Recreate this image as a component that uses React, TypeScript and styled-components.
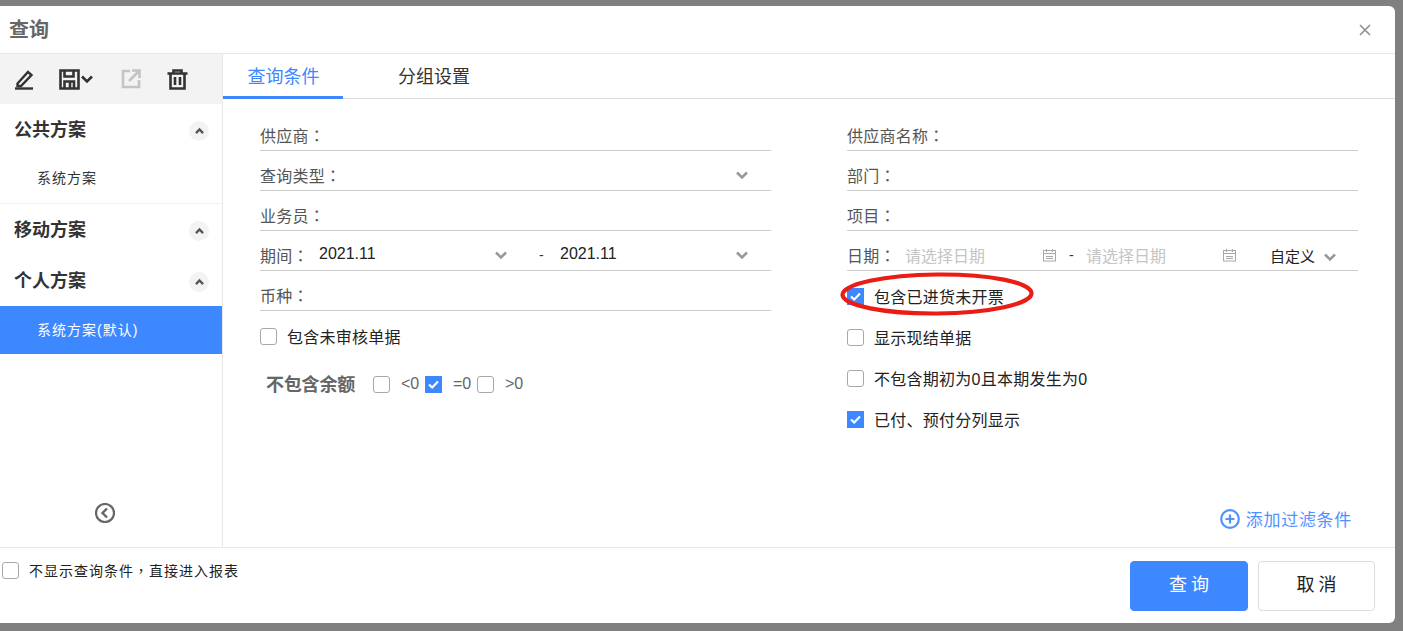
import React from "react";
import styled, { createGlobalStyle } from "styled-components";

const FONT = `"Liberation Sans", "Noto Sans CJK SC", sans-serif`;
const BLUE = "#3d87ff";

const Global = createGlobalStyle`
  html, body { margin: 0; padding: 0; height: 100%; background: #808080; overflow: hidden; }
  * { box-sizing: border-box; }
  body { font-family: ${FONT}; }
`;

const Page = styled.div`
  width: 1403px;
  height: 631px;
  padding: 6px 8px 8px 0;
  background: #808080;
`;
const Dialog = styled.div`
  position: relative;
  height: 617px;
  display: flex;
  flex-direction: column;
  background: #fff;
  border-radius: 0 6px 6px 0;
`;
const Header = styled.div`
  height: 48px;
  flex: none;
  display: flex;
  align-items: center;
  justify-content: space-between;
  padding: 0 24px 0 9px;
  border-bottom: 1px solid #e8e8e8;
`;
const Title = styled.div`
  font-size: 20px;
  line-height: 48px;
  font-weight: 700;
  color: #666;
`;
const Body = styled.div`
  flex: 1;
  display: flex;
  min-height: 0;
`;
const Side = styled.div`
  width: 223px;
  flex: none;
  display: flex;
  flex-direction: column;
  border-right: 1px solid #e8e8e8;
`;
const Toolbar = styled.div`
  height: 50px;
  flex: none;
  display: flex;
  align-items: center;
  padding-left: 14px;
  background: #f3f3f3;
`;
const Tool = styled.span<{ $w: number }>`
  display: flex;
  align-items: center;
  width: ${(p) => p.$w}px;
`;
const GroupHead = styled.div<{ $h: number }>`
  height: ${(p) => p.$h}px;
  flex: none;
  display: flex;
  align-items: center;
  justify-content: space-between;
  padding: 0 13px 0 14px;
  font-size: 18px;
  font-weight: 700;
  color: #333;
`;
const GroupName = styled.span`
  margin-top: -4px;
`;
const Round = styled.span`
  width: 20px;
  height: 20px;
  margin-top: 2px;
  border-radius: 50%;
  background: #f3f3f3;
  display: flex;
  align-items: center;
  justify-content: center;
`;
const Item = styled.div<{ $active?: boolean }>`
  height: 48px;
  flex: none;
  padding: 0 0 ${(p) => (p.$active ? 2 : 6)}px 37px;
  display: flex;
  align-items: center;
  font-size: 14px;
  letter-spacing: 1px;
  color: ${(p) => (p.$active ? "#fff" : "#333")};
  background: ${(p) => (p.$active ? BLUE : "transparent")};
  border-bottom: ${(p) => (p.$active ? "none" : "1px solid #f2f2f2")};
`;
const Collapse = styled.div`
  margin-top: auto;
  height: 44px;
  flex: none;
  display: flex;
  justify-content: center;
  padding-right: 12px;
`;
const Main = styled.div`
  flex: 1;
  display: flex;
  flex-direction: column;
  min-width: 0;
`;
const Tabs = styled.div`
  height: 45px;
  flex: none;
  display: flex;
  border-bottom: 1px solid #ddd;
`;
const Tab = styled.div<{ $active?: boolean }>`
  width: ${(p) => (p.$active ? "120px" : "auto")};
  margin-left: ${(p) => (p.$active ? "0" : "55px")};
  height: 45px;
  display: flex;
  align-items: center;
  justify-content: center;
  padding: 0 0 ${(p) => (p.$active ? 0 : 3)}px ${(p) => (p.$active ? 1 : 0)}px;
  font-size: 18px;
  color: ${(p) => (p.$active ? BLUE : "#333")};
  border-bottom: ${(p) => (p.$active ? `3px solid ${BLUE}` : "none")};
`;
const Form = styled.div`
  flex: 1;
  display: grid;
  grid-template-columns: 511px 511px;
  justify-content: space-between;
  padding: 12px 37px 0;
  position: relative;
`;
const Col = styled.div`
  display: flex;
  flex-direction: column;
`;
const Field = styled.div`
  height: 40px;
  display: flex;
  align-items: center;
  padding-top: 9px;
  border-bottom: 1px solid #ccc;
  font-size: 16px;
  color: #555;
`;
const Label = styled.span<{ $w?: number }>`
  ${(p) => (p.$w ? `width: ${p.$w}px; flex: none;` : "")}
  font-size: 16px;
  letter-spacing: 0.25px;
  color: #555;
  white-space: nowrap;
`;
const Colon = styled.span`
  font-family: "Noto Sans CJK TC", sans-serif;
`;
const Value = styled.span<{ $w: number }>`
  width: ${(p) => p.$w}px;
  flex: none;
  font-size: 16px;
  color: #222;
  margin-top: -2px;
`;
const Arrow = styled.span<{ $w: number; $end?: boolean; $low?: boolean }>`
  display: flex;
  align-items: center;
  flex: none;
  margin-left: ${(p) => (p.$end ? "auto" : "0")};
  margin-top: ${(p) => (p.$low ? 3 : 0)}px;
  width: ${(p) => p.$w}px;
`;
const Dash = styled.span<{ $w: number; $left?: number }>`
  width: ${(p) => p.$w}px;
  margin-left: ${(p) => p.$left ?? 0}px;
  flex: none;
  font-size: 14px;
  color: #333;
`;
const Placeholder = styled.span<{ $w: number }>`
  width: ${(p) => p.$w}px;
  font-size: 16px;
  color: #c4c4c4;
  white-space: nowrap;
  flex: none;
`;
const Spacer = styled.span<{ $w: number }>`
  width: ${(p) => p.$w}px;
  flex: none;
`;
const Custom = styled.span`
  font-size: 15px;
  color: #222;
  width: 53px;
  flex: none;
`;
const CheckLine = styled.div`
  height: 41px;
  display: flex;
  align-items: center;
  gap: 10px;
  font-size: 16px;
  letter-spacing: 0.25px;
  color: #222;
`;
const LineText = styled.span`
  margin-top: -2px;
`;
const Box = styled.span<{ $on?: boolean }>`
  width: 17px;
  height: 17px;
  flex: none;
  display: flex;
  align-items: center;
  justify-content: center;
  border-radius: ${(p) => (p.$on ? "0" : "3px")};
  border: 1px solid ${(p) => (p.$on ? BLUE : "#a8a8a8")};
  background: ${(p) => (p.$on ? BLUE : "#fff")};
`;
const Balance = styled.div`
  display: flex;
  align-items: center;
  height: 40px;
  padding-left: 7px;
  margin-top: 7px;
`;
const BalanceTitle = styled.span`
  width: 107px;
  margin-left: -1px;
  flex: none;
  font-size: 18px;
  letter-spacing: -0.2px;
  font-weight: 700;
  color: #666;
  margin-top: -2px;
`;
const Cmp = styled.span<{ $w: number }>`
  width: ${(p) => p.$w}px;
  padding-left: 11px;
  font-size: 16px;
  color: #666;
`;
const Checks = styled.div`
  margin-top: 5px;
`;
const AddFilter = styled.div`
  position: absolute;
  right: 43px;
  top: 407px;
  display: flex;
  align-items: center;
  gap: 6px;
  font-size: 17px;
  letter-spacing: 0.7px;
  color: ${BLUE};
  opacity: 0.9;
`;
const Footer = styled.div`
  height: 76px;
  flex: none;
  display: flex;
  justify-content: space-between;
  padding: 13px 20px 0 2px;
  border-top: 1px solid #e8e8e8;
`;
const FootCheck = styled.div`
  height: 21px;
  margin-top: -1px;
  display: flex;
  align-items: center;
  gap: 10px;
  font-size: 14px;
  letter-spacing: 1px;
  color: #222;
`;
const Buttons = styled.div`
  display: flex;
  gap: 10px;
`;
const Btn = styled.div<{ $primary?: boolean }>`
  width: ${(p) => (p.$primary ? 118 : 117)}px;
  height: 50px;
  display: flex;
  align-items: center;
  justify-content: center;
  padding: 0 0 6px 4px;
  font-size: 18px;
  letter-spacing: 4px;
  border-radius: 4px;
  color: ${(p) => (p.$primary ? "#fff" : "#222")};
  background: ${(p) => (p.$primary ? BLUE : "#fff")};
  border: 1px solid ${(p) => (p.$primary ? BLUE : "#ddd")};
`;
const Oval = styled.svg`
  position: absolute;
  left: 840px;
  top: 265px;
  pointer-events: none;
`;

const Chevron = ({ dir = "down", size = 14, color = "#999", sw = 2.6 }: { dir?: "down" | "up"; size?: number; color?: string; sw?: number }) => (
  <svg width={size} height={size} viewBox="0 0 14 14" fill="none">
    <path d={dir === "down" ? "M2 4.5l5 5 5-5" : "M2.5 9l4.5-4.5L11.5 9"} stroke={color} strokeWidth={sw} />
  </svg>
);
const Check = () => (
  <svg width="13" height="13" viewBox="0 0 13 13" fill="none">
    <path d="M2 6.5l3.2 3L11 3.5" stroke="#fff" strokeWidth="2.2" />
  </svg>
);
const Calendar = () => (
  <svg width="13" height="13" viewBox="0 0 13 13" fill="none" stroke="#a9a9a9" strokeWidth="1">
    <rect x="0.5" y="1.5" width="12" height="10.5" />
    <path d="M3.5 0v3M9.5 0v3M0.5 4.5h12M3 7.5h7M3 9.5h7" />
  </svg>
);
const CB = ({ on }: { on?: boolean }) => <Box $on={on}>{on && <Check />}</Box>;

const Pencil = () => (
  <svg width="20" height="22" viewBox="0 0 20 22" fill="none" stroke="#333" strokeWidth="2.4">
    <path d="M3.5 15.5L14 4l3.5 3L7 18H3.5z" />
    <path d="M1 20.5h18" strokeWidth="2.4" />
  </svg>
);
const Floppy = () => (
  <svg width="21" height="21" viewBox="0 0 21 21" fill="none" stroke="#333" strokeWidth="2.6">
    <path d="M1.5 1.5h18v18h-18z" />
    <path d="M5.5 1.5v6h9v-6M5.5 19.5v-7h9.5v7M11 13v6" />
  </svg>
);
const Share = () => (
  <svg width="20" height="20" viewBox="0 0 20 20" fill="none" stroke="#c4c4c4" strokeWidth="2.6">
    <path d="M9 2H2v16h16v-7" />
    <path d="M11 1.5h7.5V9M18 2L8 12" />
  </svg>
);
const Trash = () => (
  <svg width="21" height="21" viewBox="0 0 21 21" fill="none" stroke="#333" strokeWidth="2.6">
    <path d="M0.5 4.5h20M6.5 4V1.5h8V4M3.5 4.5v15h14v-15" />
    <path d="M8 8v8M13 8v8" />
  </svg>
);
const Up = () => <Chevron dir="up" size={11} color="#555" sw={3} />;

const App = () => (
  <Page>
    <Global />
    <Dialog>
      <Header>
        <Title>查询</Title>
        <svg width="12" height="12" viewBox="0 0 12 12" fill="none" stroke="#8a8f99" strokeWidth="1.6">
          <path d="M1 1l10 10M11 1L1 11" />
        </svg>
      </Header>
      <Body>
        <Side>
          <Toolbar>
            <Tool $w={45}><Pencil /></Tool>
            <Tool $w={62}><Floppy /><Chevron size={14} color="#333" sw={2.6} /></Tool>
            <Tool $w={46}><Share /></Tool>
            <Tool $w={24}><Trash /></Tool>
          </Toolbar>
          <GroupHead $h={52}><GroupName>公共方案</GroupName><Round><Up /></Round></GroupHead>
          <Item>系统方案</Item>
          <GroupHead $h={52}><GroupName>移动方案</GroupName><Round><Up /></Round></GroupHead>
          <GroupHead $h={50}><GroupName>个人方案</GroupName><Round><Up /></Round></GroupHead>
          <Item $active>系统方案(默认)</Item>
          <Collapse>
            <svg width="20" height="20" viewBox="0 0 20 20" fill="none" stroke="#666" strokeWidth="2.2">
              <circle cx="10" cy="10" r="9" />
              <path d="M12 5.5L7.5 10l4.5 4.5" strokeWidth="2.4" />
            </svg>
          </Collapse>
        </Side>
        <Main>
          <Tabs>
            <Tab $active>查询条件</Tab>
            <Tab>分组设置</Tab>
          </Tabs>
          <Form>
            <Col>
              <Field><Label>供应商<Colon>：</Colon></Label></Field>
              <Field><Label>查询类型<Colon>：</Colon></Label><Arrow $w={36} $end><Chevron /></Arrow></Field>
              <Field><Label>业务员<Colon>：</Colon></Label></Field>
              <Field>
                <Label $w={59}>期间<Colon>：</Colon></Label>
                <Value $w={175}>2021.11</Value>
                <Arrow $w={45}><Chevron /></Arrow>
                <Dash $w={21}>-</Dash>
                <Value $w={175}>2021.11</Value>
                <Arrow $w={36}><Chevron /></Arrow>
              </Field>
              <Field><Label>币种<Colon>：</Colon></Label></Field>
              <Checks>
                <CheckLine><CB /><LineText>包含未审核单据</LineText></CheckLine>
              </Checks>
              <Balance>
                <BalanceTitle>不包含余额</BalanceTitle>
                <CB /><Cmp $w={35}>&lt;0</Cmp>
                <CB on /><Cmp $w={35}>=0</Cmp>
                <CB /><Cmp $w={35}>&gt;0</Cmp>
              </Balance>
            </Col>
            <Col>
              <Field><Label>供应商名称<Colon>：</Colon></Label></Field>
              <Field><Label>部门<Colon>：</Colon></Label></Field>
              <Field><Label>项目<Colon>：</Colon></Label></Field>
              <Field>
                <Label $w={58}>日期<Colon>：</Colon></Label>
                <Placeholder $w={138}>请选择日期</Placeholder>
                <Calendar />
                <Dash $w={17} $left={13}>-</Dash>
                <Placeholder $w={137}>请选择日期</Placeholder>
                <Calendar />
                <Spacer $w={34} />
                <Custom>自定义</Custom>
                <Arrow $w={14} $low><Chevron /></Arrow>
              </Field>
              <Checks>
                <CheckLine><CB on /><LineText>包含已进货未开票</LineText></CheckLine>
                <CheckLine><CB /><LineText>显示现结单据</LineText></CheckLine>
                <CheckLine><CB /><LineText>不包含期初为0且本期发生为0</LineText></CheckLine>
                <CheckLine><CB on /><LineText>已付、预付分列显示</LineText></CheckLine>
              </Checks>
            </Col>
            <AddFilter>
              <svg width="20" height="20" viewBox="0 0 20 20" fill="none" stroke={BLUE} strokeWidth="2.2">
                <circle cx="10" cy="10" r="8.8" />
                <path d="M5.5 10h9M10 5.5v9" />
              </svg>
              添加过滤条件
            </AddFilter>
          </Form>
        </Main>
      </Body>
      <Footer>
        <FootCheck><CB /><LineText>不显示查询条件<Colon>，</Colon>直接进入报表</LineText></FootCheck>
        <Buttons>
          <Btn $primary>查询</Btn>
          <Btn>取消</Btn>
        </Buttons>
      </Footer>
      <Oval width="198" height="46" viewBox="0 0 198 46" fill="none">
        <ellipse cx="97" cy="23" rx="94.5" ry="19.5" stroke="#ea1c14" strokeWidth="4.2" transform="rotate(-0.5 97 23)" />
      </Oval>
    </Dialog>
  </Page>
);

export default App;
